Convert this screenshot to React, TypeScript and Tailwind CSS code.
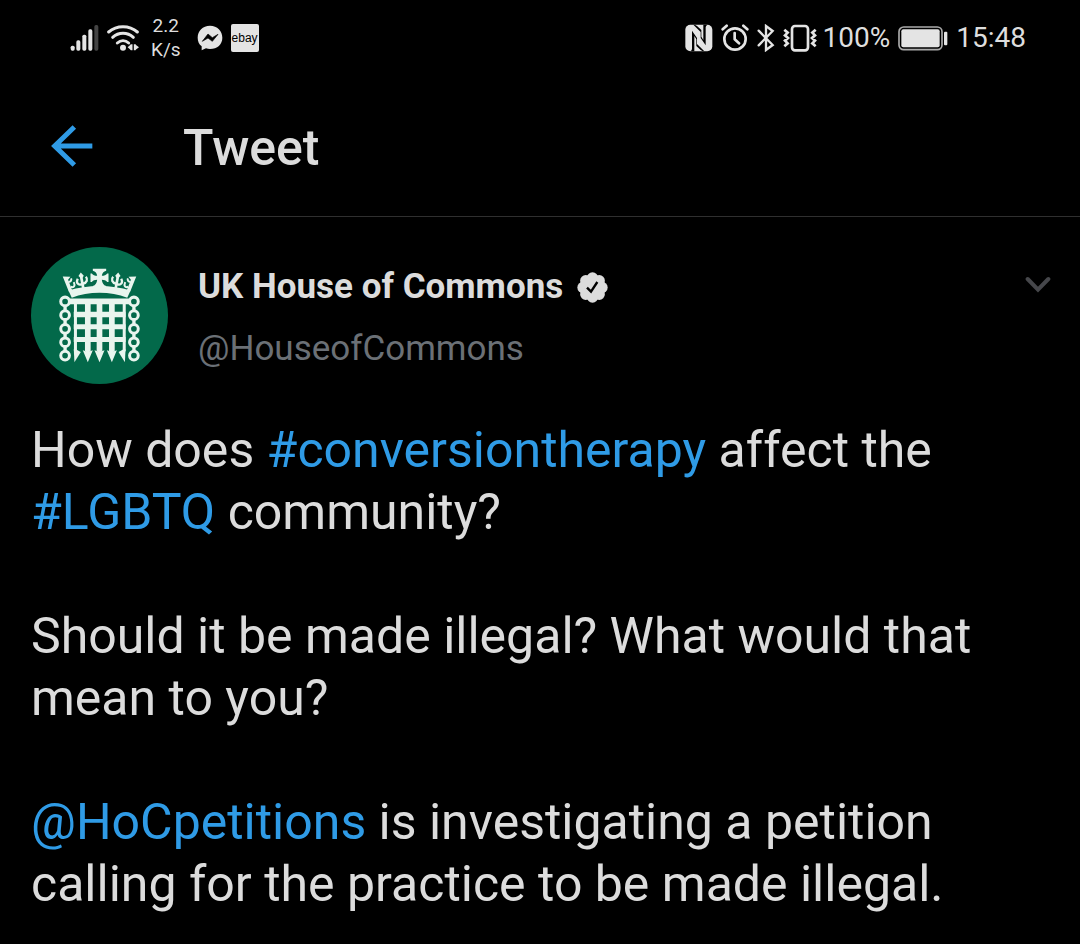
import type { ReactNode } from 'react'

const LINK = 'text-[#2f9be6]'

function SignalIcon() {
  return (
    <svg width="29" height="26" viewBox="0 0 87 78" fill="#e4e4e4" aria-hidden="true">
      <rect x="2" y="62" width="12" height="15" rx="5" />
      <rect x="19" y="46" width="12" height="31" rx="5" />
      <rect x="37" y="29" width="12" height="48" rx="5" />
      <rect x="55" y="13" width="12" height="64" rx="5" />
      <rect x="73" y="0" width="12" height="77" rx="5" fill="#444" />
    </svg>
  )
}

function WifiIcon() {
  return (
    <svg width="32" height="26" viewBox="0 0 96 78" fill="none" stroke="#e4e4e4" strokeWidth="9" strokeLinecap="round" aria-hidden="true">
      <path d="M5 21C29 0 67 0 91 21" />
      <path d="M17 37C35 21 61 21 79 37" />
      <path d="M31 54C41 45 55 45 65 54" />
      <circle cx="48" cy="68" r="9" fill="#e4e4e4" stroke="none" />
      <path d="M62 67l10-9v18zM84 58l12 9-12 9z" fill="#e4e4e4" stroke="none" />
      <path d="M74 58v18M83 58v18" strokeWidth="5" strokeLinecap="butt" />
    </svg>
  )
}

function MessengerIcon() {
  return (
    <svg width="26" height="26" viewBox="0 0 78 78" aria-hidden="true">
      <path d="M39 2C17 2 2 17 2 38c0 11 4 20 12 26v12l13-6c4 1 8 2 12 2 22 0 37-14 37-34S61 2 39 2z" fill="#e4e4e4" />
      <path d="M16 49l17-22 13 11 17-10-17 21-13-10z" fill="#000" stroke="#000" strokeWidth="2" strokeLinejoin="round" />
    </svg>
  )
}

function NfcIcon() {
  return (
    <svg width="28" height="28" viewBox="0 0 84 84" aria-hidden="true">
      <rect x="1" y="2" width="81" height="80" rx="15" fill="#e4e4e4" />
      <path d="M21 14v60q0 5-5 8h12V36l6 10v20l13 12q5 4 11 4L36 60V42L21 20z" fill="#000" />
      <path d="M62 70V10q0-5 5-8H55v46l-6-10V18L36 6q-5-4-11-4l22 22v18l15 22z" fill="#000" />
    </svg>
  )
}

function AlarmIcon() {
  return (
    <svg width="28" height="28" viewBox="0 0 84 84" fill="none" stroke="#e4e4e4" strokeWidth="8" strokeLinecap="round" strokeLinejoin="round" aria-hidden="true">
      <circle cx="42" cy="45" r="32" />
      <path d="M41 27v19l13 12M5 16L17 5M79 16L67 5" />
    </svg>
  )
}

function BluetoothIcon() {
  return (
    <svg width="18" height="28" viewBox="0 0 54 84" fill="none" stroke="#e4e4e4" strokeWidth="7" strokeLinecap="round" strokeLinejoin="miter" aria-hidden="true">
      <path d="M5 20l42 43-20 15V6l20 15L5 64" />
    </svg>
  )
}

function VibrateIcon() {
  return (
    <svg width="34" height="28" viewBox="0 0 102 84" fill="none" stroke="#e4e4e4" strokeWidth="8" aria-hidden="true">
      <rect x="27" y="6" width="48" height="73" rx="9" />
      <path d="M4 17l10 9-8 8 9 8-9 8 8 8-10 9M98 17l-10 9 8 8-9 8 9 8-8 8 10 9" />
    </svg>
  )
}

function BatteryIcon() {
  return (
    <svg width="50" height="25" viewBox="0 0 150 75" aria-hidden="true">
      <rect x="3" y="3" width="129" height="68" rx="14" fill="none" stroke="#aaa" strokeWidth="5" />
      <rect x="10" y="10" width="115" height="54" rx="6" fill="#e4e4e4" />
      <rect x="138" y="17" width="10" height="41" rx="3" fill="#e4e4e4" />
    </svg>
  )
}

function VerifiedIcon() {
  const petals = [0, 45, 90, 135, 180, 225, 270, 315]
  return (
    <svg width="31" height="31" viewBox="0 0 93 93" role="img" aria-label="Verified account">
      <circle cx="46.5" cy="46.5" r="38" fill="#dcdcdc" />
      {petals.map(angle => (
        <circle key={angle} cx="46.5" cy="18" r="17" fill="#dcdcdc" transform={`rotate(${angle} 46.5 46.5)`} />
      ))}
      <path d="M30 47l12 12 19-29" fill="none" stroke="#000" strokeWidth="7" />
    </svg>
  )
}

// Half of the crown, mirrored around the centre line for the other side
function CrownHalf() {
  return (
    <>
      <path d="M127 124l23 1-7 9 12 31-10 4z" />
      <path d="M181 112l9 10-6 9-10-8z" />
      <g fill="none" stroke="#e9f5ee" strokeWidth="8">
        <path d="M181 120l8 42" />
        <path d="M185 147c-13 5-19-5-13-16M187 146c13-3 16-14 9-21" strokeWidth="7" />
        <path d="M151 155c10 4 14-3 9-14M144 141c7-1 10-5 8-11" strokeWidth="6" />
      </g>
    </>
  )
}

function Portcullis() {
  const columns = [165, 202, 237, 274, 311]
  const rings = [199, 240, 281, 321, 361]
  return (
    <svg className="size-[137px] shrink-0" viewBox="32 36 410 410" role="img" aria-label="UK House of Commons">
      <circle cx="237" cy="241" r="205" fill="#03694a" />
      <g fill="#e9f5ee">
        <CrownHalf />
        <g transform="translate(474 0) scale(-1 1)"><CrownHalf /></g>
        <path d="M217 101h40v6c-8 2-12 7-13 15 7 0 13-2 16-7h4v26h-4c-3-5-9-7-16-7 1 10 5 16 13 19v8h-40v-8c8-3 12-9 13-19-7 0-13 2-16 7h-4v-26h4c3 5 9 7 16 7-1-8-5-13-13-15z" />
        <path d="M144 166c57-18 129-18 186 0l-10 22c-50-20-116-20-166 0z" />
        <path d="M148 190h179v17H148z" />
        <path d="M160 230h155v16H160zM160 267h155v15H160zM160 305h155v15H160z" />
        {columns.map((x, i) => {
          const w = i === 0 || i === 4 ? 9 : 17
          return (
            <g key={x}>
              <rect x={x - w / 2} y="200" width={w} height="148" />
              <path d={i === 0 ? 'M160 342h6l15 8-19 31z' : i === 4 ? 'M315 342h-6l-15 8 19 31z' : `M${x - 15} 345l9 3 6-7 6 7 9-3-15 36z`} />
            </g>
          )
        })}
      </g>
      <g fill="none" stroke="#e9f5ee">
        {rings.map(y => (
          <g key={y} strokeWidth="9">
            <circle cx="134" cy={y} r="13" />
            <circle cx="340" cy={y} r="13" />
          </g>
        ))}
        <path d="M134 211v16m0 26v16m0 25v15m0 25v15M340 211v16m0 26v16m0 25v15m0 25v15" strokeWidth="10" />
      </g>
    </svg>
  )
}

function StatusBar() {
  return (
    <div className="flex h-[76px] items-center justify-between pl-[70px] pr-[54px] text-[28px] leading-8 text-[#dedede]">
      <div className="flex items-center">
        <SignalIcon />
        <div className="ml-2 flex"><WifiIcon /></div>
        <div className="ml-3 text-center text-[19px] leading-6">
          <div>2.2</div>
          <div>K/s</div>
        </div>
        <div className="ml-4 flex"><MessengerIcon /></div>
        <div className="ml-2 flex size-7 items-center justify-center rounded-xs bg-[#e4e4e4] font-['Liberation_Sans',sans-serif] text-[12px] leading-4 text-black">ebay</div>
      </div>
      <div className="flex items-center">
        <NfcIcon />
        <div className="ml-2 flex"><AlarmIcon /></div>
        <div className="ml-2 flex"><BluetoothIcon /></div>
        <div className="ml-2 flex"><VibrateIcon /></div>
        <span className="ml-1.5">100%</span>
        <div className="mx-2 flex"><BatteryIcon /></div>
        <span>15:48</span>
      </div>
    </div>
  )
}

function Tag({ children }: { children: ReactNode }) {
  return <a href="#" className={LINK}>{children}</a>
}

export default function App() {
  return (
    <div className="min-h-screen bg-black font-[Roboto,sans-serif] text-[#dcdcdc]">
      <StatusBar />

      <header className="flex h-[141px] items-center border-b border-[#2f2f2f] pl-[51px]">
        <button type="button" aria-label="Back" className="flex">
          <svg width="42" height="42" viewBox="0 0 126 126" fill="none" stroke="#2f9be6" strokeWidth="15" aria-hidden="true">
            <path d="M70 6L11 63l59 57M10 63h114" />
          </svg>
        </button>
        <h1 className="ml-[90px] pt-1 text-[50px] leading-[60px] font-medium">Tweet</h1>
      </header>

      <article className="pl-[31px] pr-[29px] pt-[30px]">
        <div className="flex items-start">
          <Portcullis />
          <div className="ml-[30px] flex-1 pt-[19px]">
            <div className="flex items-center gap-[14px]">
              <span className="text-[35px] leading-[42px] font-bold">UK House of Commons</span>
              <VerifiedIcon />
            </div>
            <div className="mt-5 text-[35px] leading-[42px] text-[#6b7076]">@HouseofCommons</div>
          </div>
          <button type="button" aria-label="More options" className="mt-7 flex">
            <svg width="26" height="18" viewBox="0 0 78 54" fill="none" stroke="#46474b" strokeWidth="12" strokeLinecap="round" aria-hidden="true">
              <path d="M8 12l31 32L70 12" />
            </svg>
          </button>
        </div>

        <div className="mt-[35px] flex flex-col gap-[62px] text-[50px] leading-[62px]">
          <p>How does <Tag>#conversiontherapy</Tag> affect the <Tag>#LGBTQ</Tag> community?</p>
          <p>Should it be made illegal? What would that mean to you?</p>
          <p><Tag>@HoCpetitions</Tag> is investigating a petition calling for the practice to be made illegal.</p>
        </div>
      </article>
    </div>
  )
}
